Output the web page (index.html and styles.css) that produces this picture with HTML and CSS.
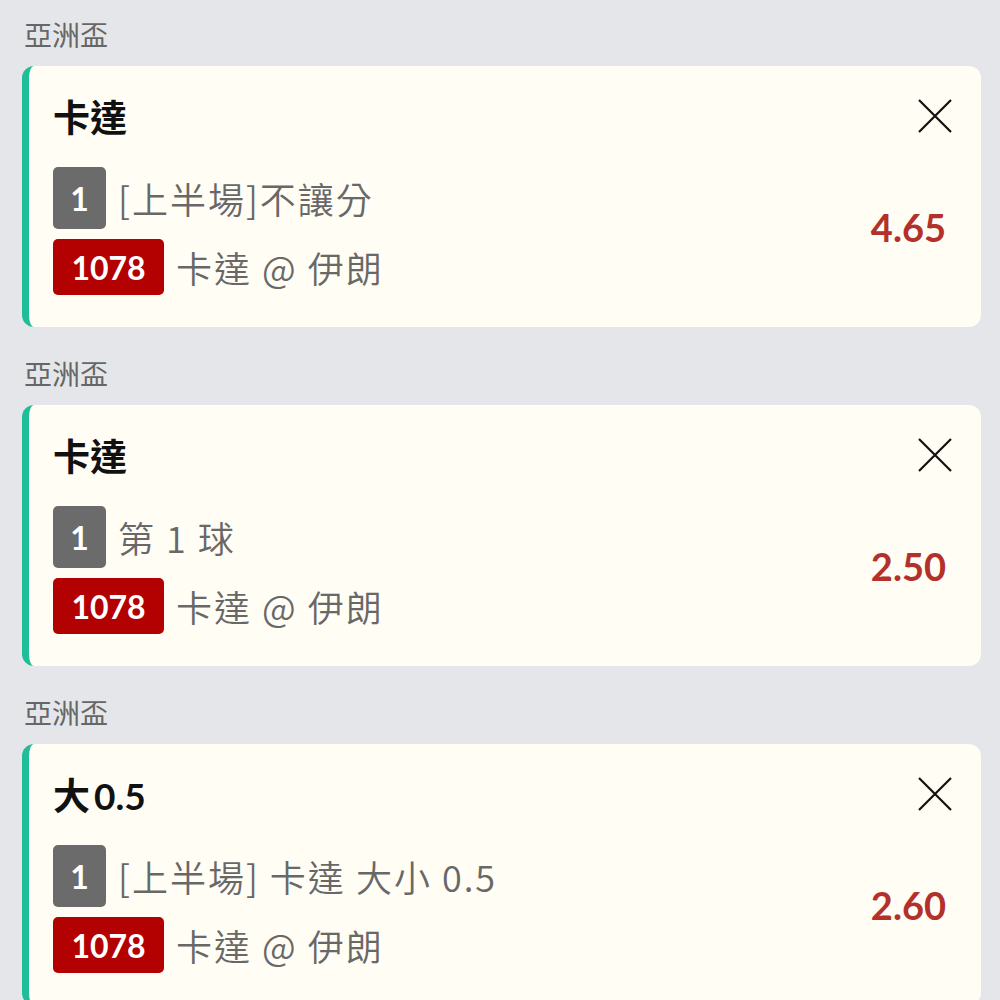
FILE: index.html
```html
<!DOCTYPE html>
<html lang="zh-Hant">
<head>
    <meta charset="UTF-8">
    <meta name="viewport" content="width=device-width, initial-scale=1.0">
    <title>投注單</title>
    <link rel="stylesheet" href="styles.css">
</head>
<body>
<div class="slip">
    <div class="group">
        <div class="league">亞洲盃</div>
        <div class="card">
            <div class="card-head">
                <div class="pick">卡達</div>
                <button class="close" aria-label="移除">
                    <svg viewBox="0 0 34 34" width="34" height="34"><path d="M1 1L33 33M33 1L1 33" /></svg>
                </button>
            </div>
            <div class="card-body">
                <div class="lines">
                    <div class="line"><span class="tag tag-leg">1</span><span class="text">[上半場]不讓分</span></div>
                    <div class="line"><span class="tag tag-match">1078</span><span class="text">卡達 @ 伊朗</span></div>
                </div>
                <div class="odds">4.65</div>
            </div>
        </div>
    </div>

    <div class="group">
        <div class="league">亞洲盃</div>
        <div class="card">
            <div class="card-head">
                <div class="pick">卡達</div>
                <button class="close" aria-label="移除">
                    <svg viewBox="0 0 34 34" width="34" height="34"><path d="M1 1L33 33M33 1L1 33" /></svg>
                </button>
            </div>
            <div class="card-body">
                <div class="lines">
                    <div class="line"><span class="tag tag-leg">1</span><span class="text">第 1 球</span></div>
                    <div class="line"><span class="tag tag-match">1078</span><span class="text">卡達 @ 伊朗</span></div>
                </div>
                <div class="odds">2.50</div>
            </div>
        </div>
    </div>

    <div class="group">
        <div class="league">亞洲盃</div>
        <div class="card">
            <div class="card-head">
                <div class="pick">大<span class="pick-num">0.5</span></div>
                <button class="close" aria-label="移除">
                    <svg viewBox="0 0 34 34" width="34" height="34"><path d="M1 1L33 33M33 1L1 33" /></svg>
                </button>
            </div>
            <div class="card-body">
                <div class="lines">
                    <div class="line"><span class="tag tag-leg">1</span><span class="text">[上半場] 卡達 大小 0.5</span></div>
                    <div class="line"><span class="tag tag-match">1078</span><span class="text">卡達 @ 伊朗</span></div>
                </div>
                <div class="odds">2.60</div>
            </div>
        </div>
    </div>
</div>
</body>
</html>
```

FILE: styles.css
```css
body {
    margin: 0;
    background-color: #e5e6e9;
    font-family: Lato, "Noto Sans CJK TC", sans-serif;
    overflow: hidden;
}
.slip {
    padding: 17px 19px 0 22px;
}
.group + .group {
    margin-top: 29px;
}
.league {
    font-size: 28px;
    line-height: 36px;
    color: #666666;
    padding: 0 0 13px 2px;
}
.card {
    background-color: #fffdf4;
    border-left: 7px solid #1fbd98;
    border-radius: 12px;
    padding: 30px 29px 32px 24px;
}
.card-head {
    display: flex;
    justify-content: space-between;
    align-items: center;
    height: 40px;
}
.pick {
    font-size: 37px;
    font-weight: 700;
    color: #111111;
}
.pick-num {
    margin-left: 4px;
}
.close {
    border: none;
    background: none;
    padding: 0;
    width: 34px;
    height: 34px;
}
.close svg {
    display: block;
}
.close path {
    stroke: #111111;
    stroke-width: 2.2;
    fill: none;
}
.card-body {
    display: flex;
    justify-content: space-between;
    align-items: center;
    margin-top: 31px;
}
.lines {
    display: flex;
    flex-direction: column;
    gap: 10px;
}
.line {
    display: flex;
    align-items: center;
    gap: 12px;
}
.tag {
    display: flex;
    align-items: center;
    justify-content: center;
    color: #ffffff;
    font-family: Lato, sans-serif;
    font-weight: 700;
    border-radius: 5px;
}
.tag-leg {
    width: 53px;
    height: 62px;
    font-size: 32px;
    background-color: #6b6b6b;
}
.tag-match {
    width: 111px;
    height: 56px;
    font-size: 32px;
    background-color: #b30000;
}
.text {
    font-family: "Noto Sans CJK TC", sans-serif;
    font-size: 36px;
    font-weight: 350;
    letter-spacing: 2px;
    color: #686868;
}
.odds {
    font-size: 38px;
    font-weight: 700;
    color: #b3302b;
    margin-right: 6px;
    margin-bottom: 8px;
}
```
